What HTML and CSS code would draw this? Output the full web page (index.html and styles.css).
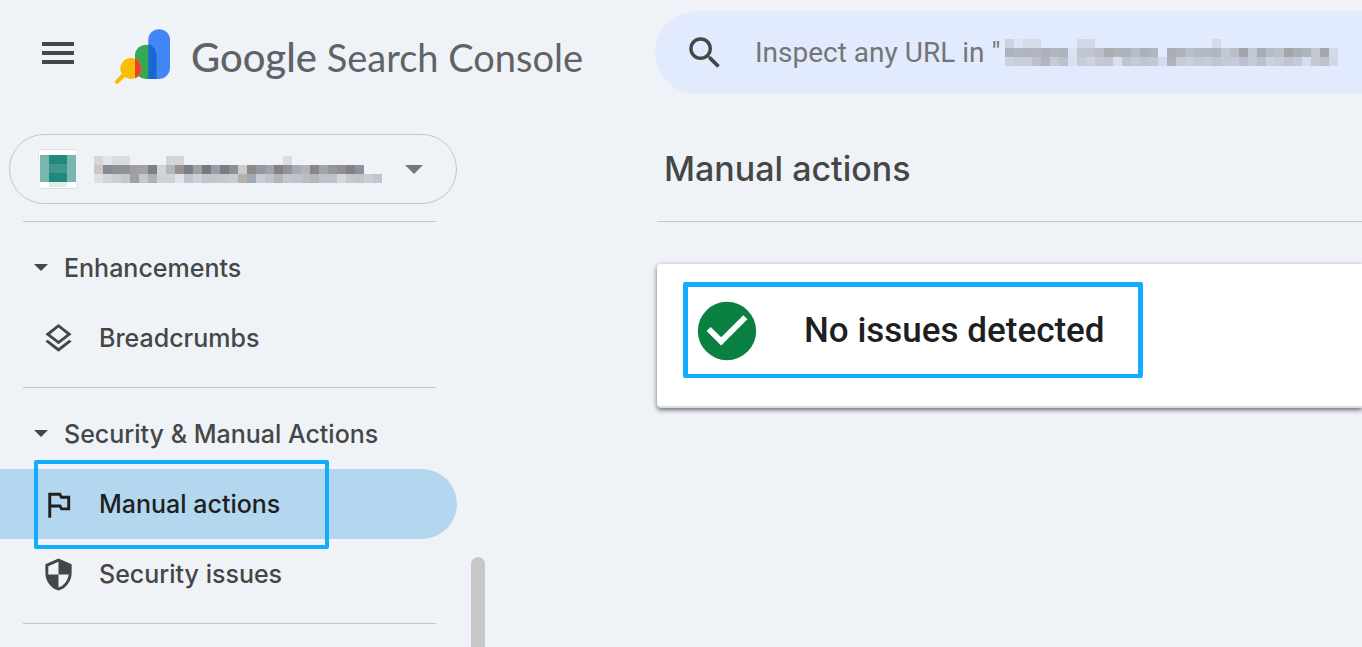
FILE: index.html
```html
<!DOCTYPE html>
<html lang="en">

<head>
    <meta charset="UTF-8">
    <meta name="viewport" content="width=device-width, initial-scale=1.0">
    <title>Manual actions</title>
    <link rel="stylesheet" href="styles.css">
</head>

<body>

    <div class="page">
        <div class="left">
            <header class="brand">
                <button class="menu-btn" type="button" aria-label="Main menu">
                    <svg width="32" height="22" viewBox="0 0 32 22">
                        <path fill="#444746" d="M0 0h32v4H0zM0 9h32v4H0zM0 18h32v4H0z" />
                    </svg>
                </button>
                <a class="logo" href="#">
                    <svg width="56" height="56" viewBox="0 0 56 56">
                        <defs>
                            <clipPath id="green-bar">
                                <path d="M20 50V25a10.700 10.700 0 0 1 21.500 0V50z" />
                            </clipPath>
                        </defs>
                        <path fill="#4285f4" d="M33.300 50V11a10.800 10.800 0 0 1 21.700 0V39.500A10.800 10.800 0 0 1 44.500 50z" />
                        <path fill="#34a853" d="M20 39.500V25.500a10.800 10.800 0 0 1 21.500 0V50H31A10.700 10.700 0 0 1 20 39.500z" />
                        <path fill="#1967d2" d="M33.300 15.100a10.800 10.800 0 0 1 8.200 10.400V50h-8.200z" />
                        <path stroke="#fbbc04" stroke-width="4.200" stroke-linecap="round" d="M2.100 52.700L12 42.500" />
                        <circle cx="16" cy="39.500" r="10.600" fill="#fbbc04" />
                        <circle cx="16" cy="39.500" r="10.600" fill="#ea4335" clip-path="url(#green-bar)" />
                    </svg>
                    <span class="wordmark"><b>Google</b> Search Console</span>
                </a>
            </header>

            <div class="side">
                <div class="side-content">
                    <button class="property" type="button" aria-label="Select property">
                        <svg class="favicon" width="40" height="40" viewBox="0 0 40 40">
                            <rect x="0.500" y="0.500" width="39" height="39" rx="3" fill="#fff" stroke="#dcdfe1" />
                            <path fill="#eff3f8" d="M0 9h2v26H0zM38 4h2v31h-2z" />
                            <path fill="#7ab5af" d="M2 6h36v27H2z" />
                            <path fill="#23877d" d="M11 6h18v27H11z" />
                            <path fill="#41968c" d="M11 15h18v9H11z" />
                            <path fill="#deeeea" d="M11 33h18v5H11z" />
                        </svg>
                        <svg class="mosaic property-name" width="289" height="27" data-rows="d8d6d4 dde6f2 d8dbe0 d8dbe0 - - - - d1d4da d1d4da - - - - - - - - - - - dadde2|cfc6c4 868b90 8b9196 8f9396 a09fa3 a3a3a3 7f7f81 cfd4de b5b6b8 97928f 7a7f87 9f9fa1 77797f 979da6 7d7d7e 88909a cfcac7 8b8b8b 9098a4 a0a3aa 84827f 8e9498 a5aab3 b3b5b7 8b8683 a1a5ab 91979b 938e8c 7f8385 8b929a|dfe0e3 d1d4db cccfd6 c5c7cd a09fa3 c4c7ce aeb0b8 cfd1d6 cfd1d6 dbe3ee c4c5ca cbd2de c2c5cb c4c6ce c5c7cf c9cad2 b3b0ad a0a9b3 c9ccd5 bfc2ca b2b4b8 c2c5cc bfc3cb b9bdc8 b5b6bc bec1c8 bcc2ca d5d7dc c4c7cc c0c4cb cbcdd1 c0c5d0"></svg>
                        <svg class="caret" width="18" height="9" viewBox="0 0 18 9">
                            <path fill="#747775" d="M0 0h18L9 9z" />
                        </svg>
                    </button>

                    <nav>
                        <hr>
                        <button class="section" type="button">
                            <svg width="14" height="8" viewBox="0 0 14 8">
                                <path fill="#444746" d="M0 0h14L7 7z" />
                            </svg>
                            Enhancements
                        </button>
                        <a class="item" href="#">
                            <svg width="35" height="35" viewBox="0 0 24 24">
                                <path fill="#444746" d="M11.990 18.540l-7.370-5.730L3 14.070l9 7 9-7-1.630-1.270zM12 16l7.360-5.730L21 9l-9-7-9 7 1.630 1.270L12 16zm0-11.470L17.740 9 12 13.470 6.260 9 12 4.530z" />
                            </svg>
                            Breadcrumbs
                        </a>
                        <hr>
                        <button class="section" type="button">
                            <svg width="14" height="8" viewBox="0 0 14 8">
                                <path fill="#444746" d="M0 0h14L7 7z" />
                            </svg>
                            Security &amp; Manual Actions
                        </button>
                        <a class="item active" href="#" aria-current="page">
                            <svg width="35" height="35" viewBox="0 0 24 24">
                                <path fill="#1f1f1f" d="M12.360 6l1 2H18v6h-3.360l-1-2H7V6h5.360M13.500 4H5v17h2v-7h5.500l1 2H20V6h-5.500l-1-2z" />
                            </svg>
                            Manual actions
                        </a>
                        <a class="item" href="#">
                            <svg width="35" height="35" viewBox="0 0 24 24">
                                <path fill="#444746" d="M12 1L3 5v6c0 5.550 3.840 10.740 9 12 5.160-1.260 9-6.450 9-12V5l-9-4zm0 10.990h7c-.53 4.120-3.280 7.790-7 8.940V12H5V6.300l7-3.110v8.800z" />
                            </svg>
                            Security issues
                        </a>
                        <hr>
                    </nav>
                </div>
                <div class="scrollbar"></div>
            </div>
        </div>

        <main class="main">
            <form class="search">
                <svg width="42" height="42" viewBox="0 0 24 24">
                    <path fill="#444746" d="M15.500 14h-.79l-.28-.27A6.471 6.471 0 0 0 16 9.500 6.500 6.500 0 1 0 9.500 16c1.610 0 3.090-.59 4.230-1.570l.27.28v.79l5 4.990L20.490 19l-4.990-5zm-6 0C7.010 14 5 11.990 5 9.500S7.010 5 9.500 5 14 7.010 14 9.500 11.990 14 9.500 14z" />
                </svg>
                <input type="text" aria-label="Inspect URL" placeholder='Inspect any URL in "'>
                <svg class="mosaic" width="333" height="27" data-rows="ccd3de dde5f4 d4dcea d4dcea - - - - d2d9e5 d2d9e5 - - - - - - - - - - - - - d3dbe8|adb2bc b0b5bf afb4bf b2b4bf adb0ba b2b4bc afb2bb dae3f3 c0c5d0 c0c5cf b9bec9 aaaeb4 afb4bb adb2ba b8bec9 adb1b9 b0b5bf - a9aeb5 adb2b9 b9bfca b4bac5 b4bac4 b0b5bf c1c7d3 b9becb a1a5a9 c1c7d4 a8adb3 b7bcc8 bcc2cd a3a7ac abafb6 b0b4bd c1c7d3 a3a6aa d2dae8|ccd3e0 c8cfdc c6ccd9 bcc1cf b0b4bf c4cad7 bbc1cf d7e1f1 c6cdda ccd4e1 c3c8d4 c1c7d3 d6e0f0 bdc4d1 c4cbd8 bfc5d1 c1c7d3 d3dcec afb3bc c4cad6 c9d0dd c3c9d6 c6ccda bfc5d3 c3c9d6 c5ccd9 bbc1ce c5ccd8 bbc1cf cbd2df c5cbd8 c0c5d1 c4cad6 d6deed c3c9d5 bdc2cd d0d8e6"></svg>
            </form>

            <h1>Manual actions</h1>

            <section class="card">
                <div class="status">
                    <svg width="70" height="70" viewBox="0 0 24 24">
                        <circle cx="12" cy="12" r="10" fill="#0b8043" />
                        <path fill="#fff" d="M10 17l-5-5 1.410-1.410L10 14.170l7.590-7.590L19 8l-9 9z" />
                    </svg>
                    <h2>No issues detected</h2>
                </div>
            </section>
        </main>
    </div>

    <script src="script.js"></script>
</body>

</html>
```
FILE: styles.css
```css
* {
    box-sizing: border-box;
}

body {
    font-family: Inter, "Open Sans", sans-serif;
    margin: 0;
    background-color: #eff3f8;
    color: #444746;
    overflow: hidden;
}

button {
    padding: 0;
    border: none;
    background: none;
    color: inherit;
    font: inherit;
    text-align: left;
    cursor: pointer;
}

a {
    color: inherit;
    text-decoration: none;
}

svg {
    display: block;
    flex: none;
}

hr {
    height: 1px;
    margin: 14px 21px 11px 23px;
    border: none;
    background-color: #c4c7c5;
}

.page {
    display: grid;
    grid-template-columns: 655px minmax(0, 1fr);
    min-height: 100vh;
}

.left {
    display: flex;
    flex-direction: column;
}

/* Top left: menu button and product logo */
.brand {
    display: flex;
    align-items: center;
    gap: 41px;
    height: 106px;
    padding-left: 42px;
}

.logo {
    display: flex;
    align-items: center;
    gap: 20px;
    padding-top: 8px;
}

.wordmark {
    color: #5f6368;
    font-family: Lato, sans-serif;
    font-size: 38px;
    line-height: 48px;
    white-space: nowrap;
}

.wordmark b {
    font-size: 40px;
    font-weight: 500;
}

/* Sidebar */
.side {
    display: flex;
    flex: 1;
    gap: 14px;
    padding-top: 28px;
}

.side-content {
    width: 457px;
}

.scrollbar {
    width: 14px;
    margin-top: 423px;
    border-radius: 7px 7px 0 0;
    background-color: #c7c7c7;
}

.property {
    display: flex;
    align-items: center;
    width: 448px;
    height: 70px;
    margin: 0 0 17px 9px;
    padding: 0 33px 0 28px;
    border: 1px solid #c4c7c5;
    border-radius: 35px;
}

.property-name {
    margin-left: 16px;
}

.caret {
    margin-left: auto;
}

.section,
.item {
    display: flex;
    align-items: center;
    width: 100%;
    height: 70px;
    font-size: 25px;
    font-weight: 500;
    line-height: 32px;
    white-space: nowrap;
}

.section {
    gap: 16px;
    padding-left: 34px;
}

.item {
    position: relative;
    gap: 23px;
    padding-left: 41px;
}

.active {
    border-radius: 0 35px 35px 0;
    background-color: #b3d7ee;
    color: #1f1f1f;
}

/* Marker frame over the selected item */
.active::after {
    content: "";
    position: absolute;
    top: -9px;
    left: 34px;
    box-sizing: border-box;
    width: 295px;
    height: 89px;
    border: 4px solid #12adff;
    border-radius: 2px;
}

/* Right column */
.main {
    padding-top: 11px;
}

.search {
    display: flex;
    align-items: center;
    height: 83px;
    padding-left: 29px;
    border-radius: 42px 0 0 42px;
    background-color: #e2ebfd;
}

.search input {
    width: 250px;
    margin-left: 29px;
    padding: 0;
    border: none;
    outline: none;
    background: none;
    color: #444746;
    font-family: Roboto, sans-serif;
    font-size: 28px;
    line-height: 36px;
}

.search input::placeholder {
    color: #757575;
    opacity: 1;
}

h1 {
    margin: 0 0 42px 2px;
    padding: 53px 0 30px 7px;
    border-bottom: 1px solid #c4c7c5;
    font-size: 34px;
    font-weight: 500;
    line-height: 44px;
}

.card {
    margin-left: 2px;
    padding: 18px 26px 28px;
    border-bottom: 2px solid #dcdddf;
    border-radius: 4px 0 0 4px;
    background-color: #fff;
    box-shadow: 0 2px 4px rgba(0, 0, 0, 0.5), 0 1px 8px rgba(0, 0, 0, 0.1);
}

.status {
    display: flex;
    align-items: center;
    gap: 42px;
    width: 460px;
    height: 96px;
    padding-left: 4px;
    border: 5px solid #12adff;
    border-bottom-width: 4px;
    border-radius: 2px;
}

h2 {
    margin: 0;
    color: #1f1f1f;
    font-family: Roboto, sans-serif;
    font-size: 35px;
    font-weight: 500;
    line-height: 44px;
    white-space: nowrap;
}
```
FILE: script.js
```javascript
// Draws the pixelated labels: rows split by "|", one colour per 9px cell, "-" is empty
const CELL = 9;

document.querySelectorAll('.mosaic').forEach((svg) => {
    svg.dataset.rows.split('|').forEach((row, y) => {
        row.split(' ').forEach((color, x) => {
            if (color === '-') {
                return;
            }
            const rect = document.createElementNS('http://www.w3.org/2000/svg', 'rect');
            rect.setAttribute('x', x * CELL);
            rect.setAttribute('y', y * CELL);
            rect.setAttribute('width', CELL);
            rect.setAttribute('height', CELL);
            rect.setAttribute('fill', '#' + color);
            svg.appendChild(rect);
        });
    });
});
```
